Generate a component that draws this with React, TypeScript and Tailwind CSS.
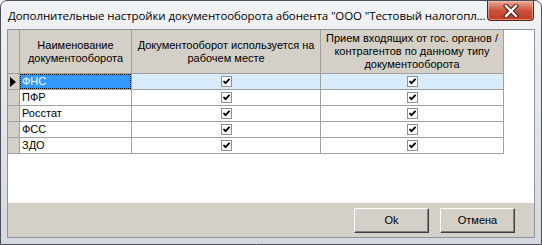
import React from 'react';

const rows = ['ФНС', 'ПФР', 'Росстат', 'ФСС', 'ЗДО'];

function Check() {
    return (
        <svg width="11" height="11" viewBox="0 0 11 11" className="block">
            <rect x="0.5" y="0.5" width="10" height="10" fill="#fff" stroke="#8e8f8f" />
            <path d="M2.5 5 L4.5 7.2 L8.6 2.8" fill="none" stroke="#000" strokeWidth="1.8" />
        </svg>
    );
}

function CloseButton() {
    return (
        <div className="absolute right-[7px] top-0 flex h-[20px] w-[47px] items-center justify-center rounded-b-[4px] border border-t-0 border-[#5b231a] bg-gradient-to-b from-[#e9a996] via-[#c9523c] to-[#c23a1f] shadow-[inset_0_0_0_1px_rgba(255,210,200,0.5)]">
            <svg width="16" height="14" viewBox="0 0 16 14">
                <path d="M3 2 L13 12 M13 2 L3 12" stroke="#3b1610" strokeWidth="4.4" strokeLinecap="square" />
                <path d="M3 2 L13 12 M13 2 L3 12" stroke="#fff" strokeWidth="2.4" strokeLinecap="square" />
            </svg>
        </div>
    );
}

export default function App() {
    const cell = 'border-r border-b border-[#a0a0a0]';
    return (
        <div className="relative h-[245px] w-[542px] overflow-hidden rounded-t-[7px] border border-[#4a4f57] bg-gradient-to-b from-[#f1f3f5] via-[#e2e6ea] to-[#d3d8de] font-['Liberation_Sans',sans-serif]">
            <div className="flex h-[28px] items-center pl-[7px] pt-[2px] font-['Open_Sans',sans-serif] text-[11.5px] tracking-[-0.1px] text-black">
                Дополнительные настройки документооборота абонента "ООО "Тестовый налогопл...
            </div>
            <CloseButton />

            <div className="mx-[6px] flex h-[209px] flex-col border border-[#8d939b] bg-white text-[11px] leading-[13px] text-black">
                <div className="flex-1">
                    <div className="grid grid-cols-[12px_112px_189px_183px] grid-rows-[44px_repeat(5,16px)]">
                        <div className={`${cell} bg-[#d4d0c8]`} />
                        <div className={`${cell} flex items-center justify-center bg-[#d4d0c8] text-center`}>
                            Наименование<br />документооборота
                        </div>
                        <div className={`${cell} flex items-center justify-center bg-[#d4d0c8] text-center`}>
                            Документооборот используется на<br />рабочем месте
                        </div>
                        <div className={`${cell} flex items-center justify-center bg-[#d4d0c8] text-center`}>
                            Прием входящих от гос. органов /<br />контрагентов по данному типу<br />документооборота
                        </div>

                        {rows.map((name, i) => {
                            const selected = i === 0;
                            return (
                                <React.Fragment key={name}>
                                    <div className={`${cell} flex items-center bg-[#d4d0c8]`}>
                                        {selected && (
                                            <svg width="6" height="10" viewBox="0 0 6 10" className="ml-[2px]">
                                                <path d="M0 0 L6 5 L0 10 Z" fill="#000" />
                                            </svg>
                                        )}
                                    </div>
                                    <div className={`${cell} flex items-center overflow-hidden`}>
                                        {selected ? (
                                            <div className="flex h-full w-full items-center border border-dotted border-[#000] bg-[#3399ff] pl-[1px] text-white">
                                                {name}
                                            </div>
                                        ) : (
                                            <span className="pl-[2px]">{name}</span>
                                        )}
                                    </div>
                                    <div className={`${cell} flex items-center justify-center ${selected ? 'bg-[#d8ecfb]' : ''}`}>
                                        <Check />
                                    </div>
                                    <div className={`${cell} flex items-center justify-center ${selected ? 'bg-[#d8ecfb]' : ''}`}>
                                        <Check />
                                    </div>
                                </React.Fragment>
                            );
                        })}
                    </div>
                </div>

                <div className="flex h-[34px] justify-end gap-[11px] bg-[#d4d0c8] pr-[19px] pt-[5px]">
                    {['Ok', 'Отмена'].map((label) => (
                        <button
                            key={label}
                            className="h-[25px] w-[75px] border border-t-white border-l-white border-r-[#404040] border-b-[#404040] bg-[#d4d0c8] text-[11px] shadow-[inset_-1px_-1px_0_#808080]"
                        >
                            {label}
                        </button>
                    ))}
                </div>
            </div>
        </div>
    );
}
